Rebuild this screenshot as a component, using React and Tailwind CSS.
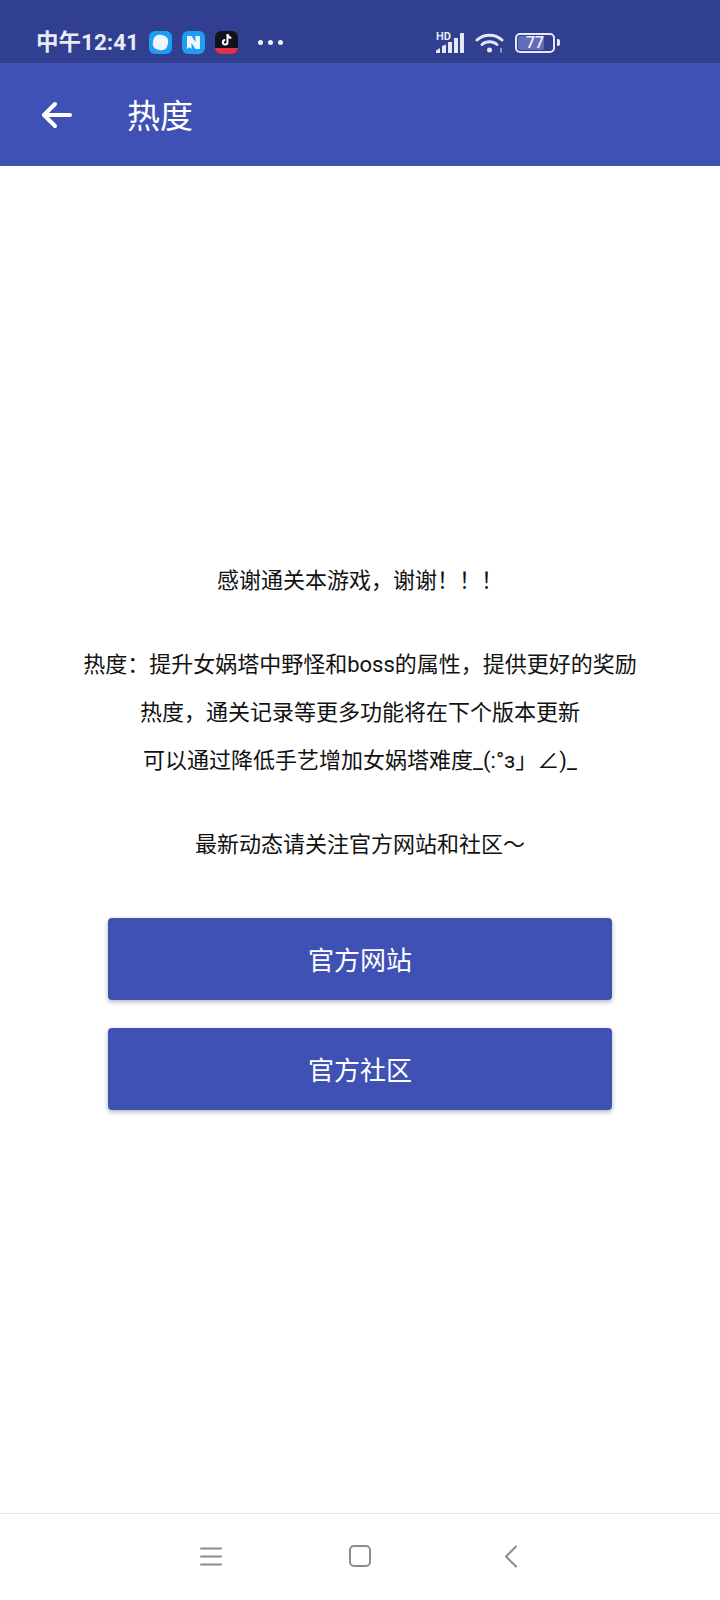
import React from 'react';

const StatusIcons = () => (
  <div className="flex items-center ml-[12px] gap-[10px]">
    <div className="w-[23px] h-[23px] rounded-[6px] bg-[#1e9df2] flex items-center justify-center">
      <div className="w-[15px] h-[15px] rounded-[6px] rotate-12 bg-[#eef7fe]" />
    </div>
    <div className="w-[23px] h-[23px] rounded-[6px] bg-[#1e9df2] flex items-center justify-center">
      <svg width="15" height="15" viewBox="0 0 15 15">
        <path d="M1 1h4.500l4 6V1H14v13H9.500l-4-6v6l-2.200-1.800L1 14z" fill="#eef7fe" />
      </svg>
    </div>
    <div className="w-[23px] h-[23px] rounded-[6px] bg-[#12121c] overflow-hidden flex flex-col items-center">
      <svg width="14" height="14" viewBox="0 0 14 14" className="mt-[2px]">
        <path d="M7.500 1v8.200a2.300 2.300 0 1 1-2.300-2.300" fill="none" stroke="#ffffff" strokeWidth="2" />
        <path d="M7.500 1.500c.4 2 1.800 3.200 3.800 3.400" fill="none" stroke="#ffffff" strokeWidth="2" />
      </svg>
      <div className="w-full h-[6px] mt-auto bg-[#e0324b]" />
    </div>
  </div>
);

const SignalIcon = () => (
  <div className="relative w-[28px] h-[20px]">
    <span className="absolute left-0 top-[-2px] text-[11px] leading-[12px] font-bold text-[#e6e9f5]">HD</span>
    <svg width="28" height="20" viewBox="0 0 28 20">
      <path d="M0 20v-2.500l4-2.500v5zM6 20v-7l4-1.500V20zM12 20V9h4v11zM18 20V5h4v15zM24 20V0h4v20z" fill="#e6e9f5" />
    </svg>
  </div>
);

const WifiIcon = () => (
  <svg width="29" height="20" viewBox="0 0 29 20" fill="none" stroke="#e6e9f5" strokeWidth="3" strokeLinecap="round">
    <path d="M2 7c7-6.500 18-6.500 25 0" />
    <path d="M7 11.500c4.300-3.800 10.700-3.800 15 0" />
    <circle cx="14.500" cy="17" r="2.500" fill="#e6e9f5" stroke="none" />
    <path d="M26 15.500v3.500" stroke="#aab3dc" strokeWidth="1.500" />
  </svg>
);

const BatteryIcon = () => (
  <div className="flex items-center gap-[2px]">
    <div className="relative w-[40px] h-[20px] rounded-[5px] border-2 border-[#e6e9f5] p-[1px]">
      <div className="w-[77%] h-full rounded-[2px] bg-[#5f6db8]" />
      <span className="absolute inset-0 flex items-center justify-center text-[16px] font-medium leading-none text-[#eef0f8]">
        77
      </span>
    </div>
    <div className="w-[3px] h-[7px] rounded-r-[2px] bg-[#e6e9f5]" />
  </div>
);

const StatusBar = () => (
  <div className="h-[63px] bg-[#303f90] flex items-center pl-[36px] pt-[22px] text-[#e8ebf6]">
    <span className="w-[101px] text-[22.500px] leading-none font-bold whitespace-nowrap">中午12:41</span>
    <StatusIcons />
    <div className="flex gap-[5px] ml-[20px]">
      <span className="w-[5px] h-[5px] rounded-full bg-[#eef0f8]" />
      <span className="w-[5px] h-[5px] rounded-full bg-[#eef0f8]" />
      <span className="w-[5px] h-[5px] rounded-full bg-[#eef0f8]" />
    </div>
    <div className="flex items-center ml-[153px] gap-[11px]">
      <SignalIcon />
      <WifiIcon />
      <BatteryIcon />
    </div>
  </div>
);

const Header = () => (
  <div className="h-[103px] bg-[#3f51b5] flex items-center pl-[41px] text-white">
    <svg width="31" height="28" viewBox="0 0 31 28" fill="none" stroke="#ffffff" strokeWidth="4" strokeLinecap="round" strokeLinejoin="round">
      <path d="M29 14H3" />
      <path d="M14 3 3 14l11 11" />
    </svg>
    <span className="ml-[55px] pt-[3px] text-[33px] leading-none">热度</span>
  </div>
);

const LinkButton = ({ label }) => (
  <button className="w-[504px] h-[82px] pt-[3px] rounded-[4px] bg-[#3f51b5] text-white text-[26px] shadow-[0_2px_5px_rgba(0,0,0,0.3)]">
    {label}
  </button>
);

const NavBar = () => (
  <div className="h-[87px] border-t border-[#e8e8e8] flex items-center pb-[2px] pl-[200px]">
    <svg width="22" height="19" viewBox="0 0 22 19" fill="none" stroke="#8c8c8c" strokeWidth="2" strokeLinecap="round">
      <path d="M1 1.500h20M1 9.500h20M1 17.500h20" />
    </svg>
    <div className="ml-[127px] w-[22px] h-[22px] rounded-[5px] border-2 border-[#8c8c8c]" />
    <svg width="14" height="23" viewBox="0 0 14 23" fill="none" stroke="#8c8c8c" strokeWidth="2" strokeLinecap="round" strokeLinejoin="round" className="ml-[133px]">
      <path d="M12 1.500 2 11.500l10 10" />
    </svg>
  </div>
);

export default function App() {
  return (
    <div className="w-[720px] h-[1600px] flex flex-col bg-white font-['Roboto','Noto_Sans_CJK_SC',sans-serif]">
      <StatusBar />
      <Header />
      <main className="flex-1 flex flex-col items-center pt-[391px] text-[22px] leading-[48px] text-[#111111] text-center">
        <p>感谢通关本游戏，谢谢！！！</p>
        <div className="mt-[36px]">
          <p>热度：提升女娲塔中野怪和boss的属性，提供更好的奖励</p>
          <p>热度，通关记录等更多功能将在下个版本更新</p>
          <p>可以通过降低手艺增加女娲塔难度_(:°з」∠)_</p>
        </div>
        <p className="mt-[36px]">最新动态请关注官方网站和社区～</p>
        <div className="mt-[49px] flex flex-col gap-[28px]">
          <LinkButton label="官方网站" />
          <LinkButton label="官方社区" />
        </div>
      </main>
      <NavBar />
    </div>
  );
}
